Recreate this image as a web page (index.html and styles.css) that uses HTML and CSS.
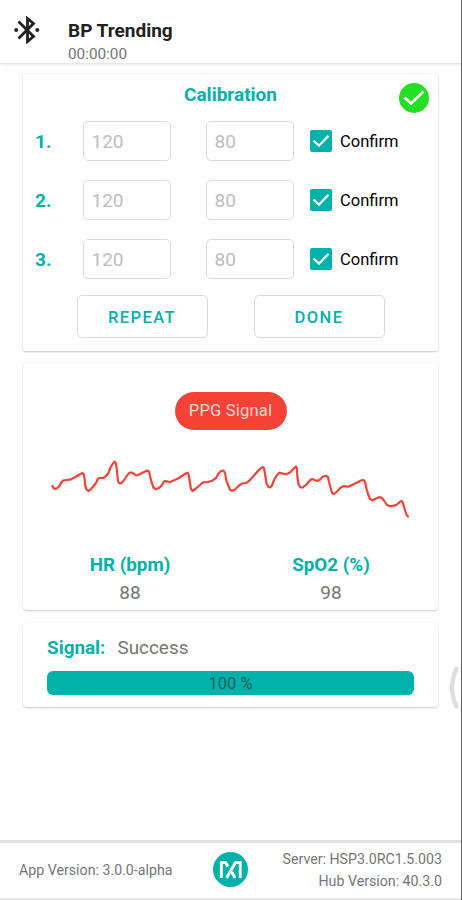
FILE: index.html
```html
<!DOCTYPE html>
<html lang="en">
<head>
<meta charset="utf-8">
<title>BP Trending</title>
<link rel="stylesheet" href="styles.css">
</head>
<body>
<div class="screen">
  <header class="header">
    <svg class="bluetooth" viewBox="0 0 26 28" fill="none" stroke="#212121" stroke-width="2.800">
      <path d="M4.500 5.500 19.500 20.500 13.500 25.500V2.500L19.500 7.500 4.500 22.500"/>
      <circle cx="2.200" cy="14" r="2" fill="#212121" stroke="none"/>
      <circle cx="23.300" cy="14" r="2" fill="#212121" stroke="none"/>
    </svg>
    <div class="heading">
      <h1>BP Trending</h1>
      <div class="timer">00:00:00</div>
    </div>
  </header>

  <main class="main">
    <section class="card calibration">
      <h2>Calibration</h2>
      <svg class="status" viewBox="0 0 30 30"><circle cx="15" cy="15" r="15" fill="#25df25"/><path d="M5.500 14.500 12 20.500 24.500 8.500" fill="none" stroke="#fff" stroke-width="2.700"/></svg>
      <div class="rows">
        <div class="row">
          <span class="num">1.</span><span class="field">120</span><span class="field second">80</span>
          <svg class="check" viewBox="0 0 22 22"><rect width="22" height="22" rx="2" fill="#00b2a9"/><path d="M3.500 10.500 9 15.700 18.500 5.800" fill="none" stroke="#fff" stroke-width="2.300"/></svg>
          <span class="confirm">Confirm</span>
        </div>
        <div class="row">
          <span class="num">2.</span><span class="field">120</span><span class="field second">80</span>
          <svg class="check" viewBox="0 0 22 22"><rect width="22" height="22" rx="2" fill="#00b2a9"/><path d="M3.500 10.500 9 15.700 18.500 5.800" fill="none" stroke="#fff" stroke-width="2.300"/></svg>
          <span class="confirm">Confirm</span>
        </div>
        <div class="row">
          <span class="num">3.</span><span class="field">120</span><span class="field second">80</span>
          <svg class="check" viewBox="0 0 22 22"><rect width="22" height="22" rx="2" fill="#00b2a9"/><path d="M3.500 10.500 9 15.700 18.500 5.800" fill="none" stroke="#fff" stroke-width="2.300"/></svg>
          <span class="confirm">Confirm</span>
        </div>
      </div>
      <div class="actions">
        <button class="button">REPEAT</button>
        <button class="button">DONE</button>
      </div>
    </section>

    <section class="card ppg">
      <div class="pill">PPG Signal</div>
      <svg class="wave" viewBox="48 455 364 70">
        <polyline points="52.500,486 53,487.500 55,489 57,488.300 59.500,486 61,483 63,480.500 66,480 70,479.700 75,477.300 80,474.300 82.500,473 83.700,474 84.500,478 85.300,486 86.500,489.300 88.500,491 90.500,489.700 96,483 98,478.500 100,478 103.500,477.800 106,476 108.500,473 110.500,467.500 112.500,464 114.700,461.600 116,463.500 116.700,469 118,481 119,483 121,483.400 123.500,481 127,475.500 129.500,472.800 131.500,472.500 134,473.800 136,475.500 138,475 143,472.500 147.300,470.500 149,471.500 150,476 151.500,482 153.500,487.500 156,489.300 159,488 162,485 164,481.300 166.500,481.200 170,482 173,480.800 179,478 185,473.800 187.500,472.700 188.700,475 189.800,482 191,489 192.500,491 196,488.500 203,482.300 208,482 212,480.800 216,478 218.500,473.500 221,471 223.500,470.500 225,473 226.500,481 228.500,486 230,489.500 232,490.800 235,489.500 239,485.500 242.300,483.400 246,483 249,481 254,475.500 260,468.800 262.700,467 264,468 265,474 266.500,483.500 268.500,487 270.500,487.300 272,485.500 274,480 277,475 279.300,472.700 282,473.400 286,474.300 290,472.500 294.500,467.800 296,466.500 296.800,468 297.500,478 298.500,484 300,487 302.500,487.700 306,485 310,480.300 312.300,479 314.500,480 317.300,481 320,479.500 323,476.500 326,475.800 328,477 329,482 331,489.500 332.300,493.300 334,494 337,491.500 341,487.300 343.500,486.200 348.300,486.700 354,484 361,480.500 363.500,480 365,482 366.500,488.500 368,494 370,499 372.500,500.300 376,498.500 379,497.200 381.500,497.500 384,500.500 387,505 390,506.300 394,505.700 397,504.500 400,501.700 401.500,501 403,503 405,510.500 406.700,515.200 408,516.500"/>
      </svg>
      <div class="vitals">
        <div class="vital"><h3>HR (bpm)</h3><p>88</p></div>
        <div class="vital"><h3>SpO2 (%)</h3><p>98</p></div>
      </div>
    </section>

    <section class="card signal">
      <div class="result"><strong>Signal:</strong><span>Success</span></div>
      <div class="progress"><span>100 %</span></div>
    </section>
  </main>

  <svg class="handle" viewBox="0 0 10 44"><path d="M7.500 3Q-1.500 22 7.500 40.500" fill="none" stroke="#dedede" stroke-width="4.300" stroke-linecap="round"/></svg>

  <footer class="footer">
    <span class="app">App Version: 3.0.0-alpha</span>
    <svg class="logo" viewBox="0 0 35 35"><circle cx="17.500" cy="17.500" r="17.500" fill="#00b2a9"/><path d="M8.300 26V10.500H12.500L14.800 14.500M13.500 26 22.500 10.500H27.200V26M18.800 20 22 26" fill="none" stroke="#fff" stroke-width="2.900"/></svg>
    <div class="versions"><span>Server: HSP3.0RC1.5.003</span><span>Hub Version: 40.3.0</span></div>
  </footer>
</div>
</body>
</html>
```
FILE: styles.css
```css
* { box-sizing: border-box; }
body { margin: 0; font-family: Roboto, sans-serif; background: #fff; }
h1, h2, h3, p { margin: 0; }
.screen { position: relative; height: 900px; border-right: 1px solid #5b6063; display: flex; flex-direction: column; background: #fefefe; overflow: hidden; }
.header { height: 64px; flex: none; display: flex; padding: 16px 0 0 14px; border-bottom: 1px solid #e6e6e6; box-shadow: 0 1px 3px rgba(0,0,0,.08); background: #fff; }
.bluetooth { width: 26px; height: 28px; }
.heading { margin-left: 28px; padding-top: 3px; }
h1 { font-size: 19px; line-height: 24px; font-weight: 700; color: #212121; }
.timer { font-size: 15.300px; line-height: 22px; color: #757575; }
.main { flex: 1; padding: 10px 23px 0; }
.card { background: #fff; border-radius: 4px; box-shadow: 0 1px 2px rgba(0,0,0,.2), 0 0 1px rgba(0,0,0,.06); }
.calibration { position: relative; height: 277px; padding-top: 9px; border-radius: 2px; box-shadow: 0 1px 2px rgba(0,0,0,.16), 0 0 2px rgba(0,0,0,.16); }
h2 { text-align: center; font-size: 19px; line-height: 24px; color: #00b2a9; font-weight: 700; }
.status { position: absolute; right: 9px; top: 9px; width: 30px; height: 30px; }
.rows { display: flex; flex-direction: column; gap: 19px; margin-top: 14px; }
.row { display: flex; align-items: center; height: 40px; padding-left: 12px; }
.num { width: 48px; padding-top: 1px; font-size: 19px; font-weight: 700; color: #00b2a9; }
.field { width: 88px; height: 40px; border: 1.500px solid #dadada; border-radius: 5px; padding-left: 7.500px; line-height: 39px; font-size: 19px; color: #bdbdbd; }
.second { margin-left: 35px; }
.check { width: 22px; height: 22px; margin-left: 16px; }
.confirm { margin-left: 8px; padding-top: 1px; font-size: 16.500px; color: #000; }
.actions { display: flex; gap: 46px; margin: 16px 0 0 53.500px; }
.button { width: 131px; height: 43px; padding: 1px 0 0; border: 1.500px solid #dadada; border-radius: 5px; background: #fff; color: #00b2a9; font: 500 16.500px Roboto, sans-serif; letter-spacing: 1.400px; }
.ppg { height: 247px; margin-top: 12px; padding-top: 29px; }
.pill { width: 112px; height: 38px; margin: 0 auto; border-radius: 19px; background: #f44336; color: #fdd9d6; text-align: center; line-height: 38px; font-size: 16.500px; letter-spacing: .2px; }
.wave { display: block; width: 364px; height: 70px; margin: 25px 0 0 25px; }
.wave polyline { fill: none; stroke: #f44336; stroke-width: 2.200; stroke-linejoin: round; stroke-linecap: round; }
.vitals { display: grid; grid-template-columns: 201px 201px; margin: 26px 0 0 6.500px; text-align: center; }
h3 { font-size: 18.800px; line-height: 28px; font-weight: 700; color: #00b2a9; }
.vital p { font-size: 19px; line-height: 28px; color: #757575; }
.signal { height: 84px; margin-top: 13px; padding: 12px 24px 0; }
.result { display: flex; gap: 12px; height: 25px; line-height: 25px; font-size: 18.900px; color: #757575; }
.result strong { color: #00b2a9; }
.progress { height: 24px; margin-top: 11px; border-radius: 6px; background: #00b2a9; text-align: center; line-height: 25px; font-size: 16.500px; color: #155e5a; }
.handle { position: absolute; right: 2px; top: 666px; width: 10px; height: 44px; }
.footer { flex: none; height: 60px; border-top: 3px solid #e0e0e0; border-bottom: 2px solid #e6e6e6; display: flex; align-items: center; padding: 0 19px 2px; justify-content: space-between; color: #757575; font-size: 14.200px; background: #fff; }
.app, .versions { width: 175px; white-space: nowrap; }
.logo { width: 35px; height: 35px; }
.versions { display: flex; flex-direction: column; align-items: flex-end; line-height: 22px; }
```
